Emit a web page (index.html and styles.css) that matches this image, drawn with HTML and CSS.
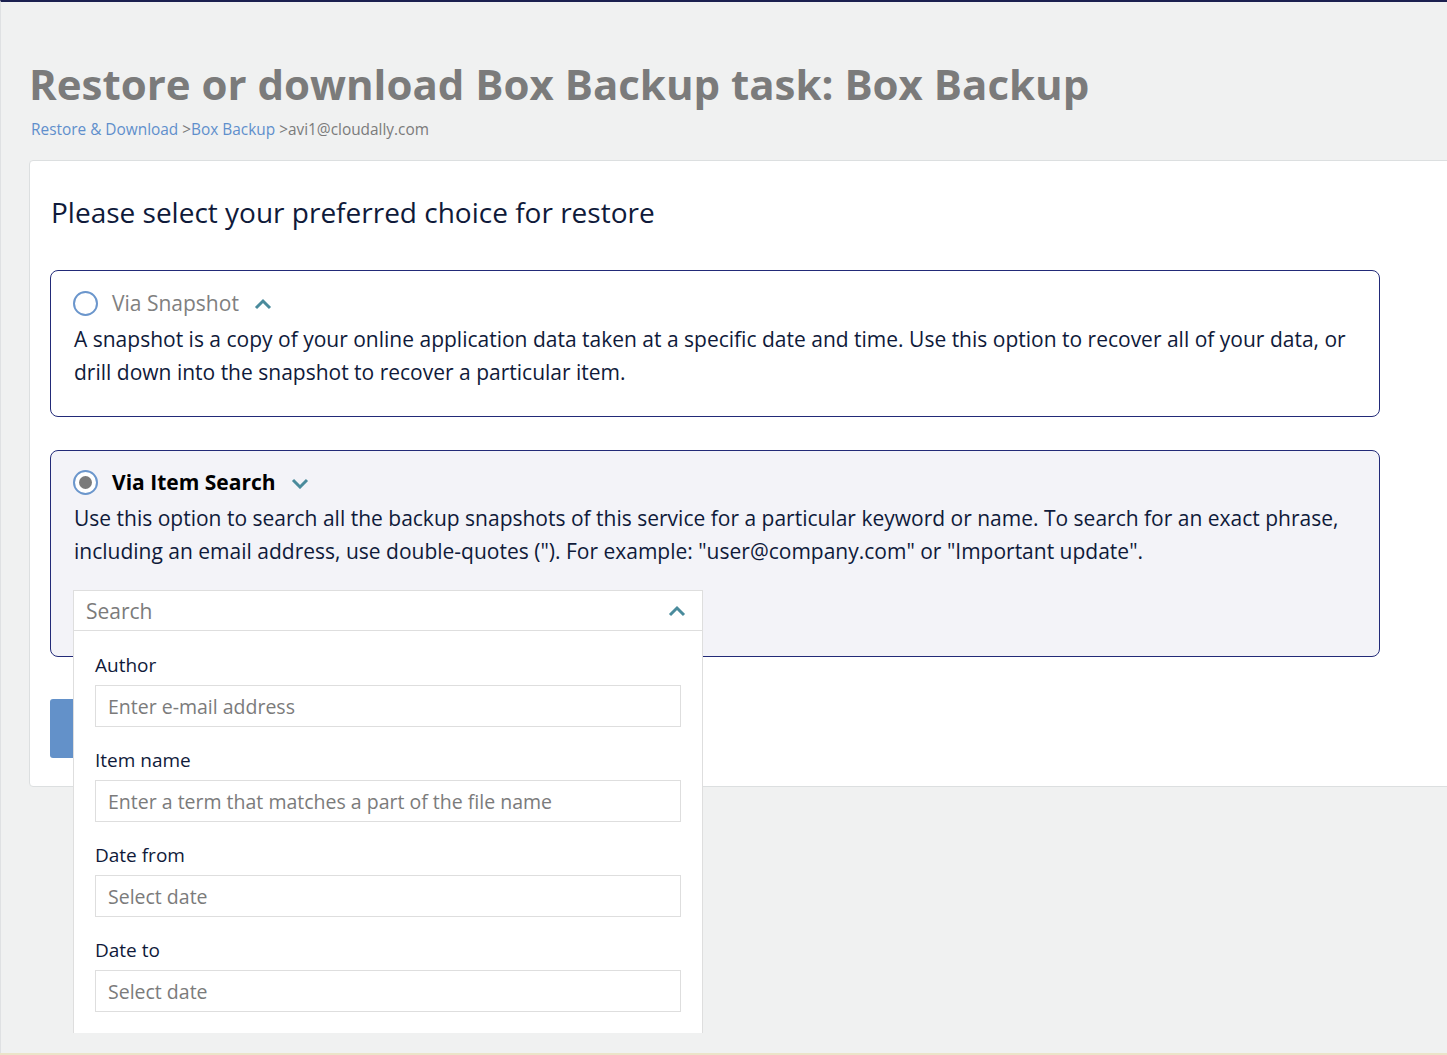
FILE: index.html
```html
<!doctype html>
<html lang="en">
<head>
<meta charset="utf-8">
<title>Restore or download Box Backup task</title>
<link rel="stylesheet" href="styles.css">
</head>
<body>

<div class="page">

	<h1 class="title">Restore or download Box Backup task: Box Backup</h1>

	<div class="crumbs">
		<a href="#">Restore &amp; Download</a> <span class="sep">&gt;</span><a href="#">Box Backup</a> <span class="sep">&gt;avi1@cloudally.com</span>
	</div>

	<div class="card">

		<h2 class="card_head">Please select your preferred choice for restore</h2>

		<div class="opt">
			<div class="opt_top">
				<span class="radio"></span>
				<span class="opt_name">Via Snapshot</span>
				<svg class="chev" width="18" height="12" viewBox="0 0 18 12"><polyline points="2,10 9,3 16,10" fill="none" stroke="#4a8b9c" stroke-width="3"/></svg>
			</div>
			<p class="opt_text">A snapshot is a copy of your online application data taken at a specific date and time. Use this option to recover all of your data, or drill down into the snapshot to recover a particular item.</p>
		</div>

		<div class="opt on">
			<div class="opt_top">
				<span class="radio"><i></i></span>
				<span class="opt_name">Via Item Search</span>
				<svg class="chev" width="18" height="12" viewBox="0 0 18 12"><polyline points="2,3 9,10 16,3" fill="none" stroke="#4a8b9c" stroke-width="3"/></svg>
			</div>
			<p class="opt_text">Use this option to search all the backup snapshots of this service for a particular keyword or name. To search for an exact phrase, including an email address, use double-quotes ("). For example: "user@company.com" or "Important update".</p>

			<div class="search">
				<div class="search_bar">
					<span>Search</span>
					<svg width="18" height="12" viewBox="0 0 18 12"><polyline points="2,10 9,3 16,10" fill="none" stroke="#4a8b9c" stroke-width="3"/></svg>
				</div>
				<div class="search_panel">
					<label>Author</label>
					<input type="text" placeholder="Enter e-mail address">
					<label>Item name</label>
					<input type="text" placeholder="Enter a term that matches a part of the file name">
					<label>Date from</label>
					<input type="text" placeholder="Select date">
					<label>Date to</label>
					<input type="text" placeholder="Select date">
				</div>
			</div>
		</div>

		<button class="go">Continue</button>

	</div>

</div>

<div class="bottom_line"></div>

</body>
</html>
```

FILE: styles.css
```css
html,body {margin:0;padding:0;}
body {
	background:#f0f1f1;
	font-family:"Open Sans", "Noto Sans", sans-serif;
	color:#0f1a3a;
	border-top:2px solid #1b2050;
	border-left:1px solid #dfe1e3;
	overflow:hidden;
	height:1053px;
	box-sizing:border-box;
}

.page { padding:0 0 0 28px; }

.title {
	margin:0;
	padding-top:54px;
	font-size:42px;
	line-height:56px;
	font-weight:700;
	color:#7b7b7b;
}

.crumbs {
	margin-top:7px;
	font-size:15.4px;
	line-height:22px;
	color:#7b7b7b;
	padding-left:2px;
}
.crumbs a { color:#5f8fcc; text-decoration:none; }

.card {
	margin-top:19px;
	width:1460px;
	height:627px;
	background:#fff;
	border:1px solid #dcdfe0;
	border-radius:4px;
	padding:33px 21px 0 20px;
	box-sizing:border-box;
}

.card_head {
	margin:0 0 40px 1px;
	font-size:28px;
	line-height:36px;
	font-weight:400;
	color:#0f1a3a;
}

/* options */

.opt {
	width:1330px;
	box-sizing:border-box;
	border:1px solid #222a78;
	border-radius:8px;
	background:#fff;
	padding:17px 23px 27px 22px;
	margin-bottom:33px;
}
.opt.on {
	background:#f3f3f8;
	padding-top:16px;
	padding-bottom:25px;
	margin-bottom:42px;
}

.opt_top {
	display:flex;
	align-items:center;
	height:30px;
}

.radio {
	width:25px; height:25px;
	box-sizing:border-box;
	border:2px solid #6b96cc;
	border-radius:50%;
	background:#fff;
	display:flex;
	align-items:center;
	justify-content:center;
	margin-right:14px;
}
.radio i {
	width:13px; height:13px;
	border-radius:50%;
	background:#7a7a7a;
}

.opt_name {
	font-size:21px;
	color:#808080;
}
.on .opt_name { color:#000; font-weight:700; }

.chev { margin-left:15px; margin-top:2px; }

.opt_text {
	margin:5px 0 0 1px;
	font-size:21px;
	line-height:33px;
	color:#0f1a3a;
}

/* search dropdown */

.search {
	position:relative;
	width:630px;
	margin-top:22px;
}

.search_bar {
	height:41px;
	box-sizing:border-box;
	background:#fff;
	border:1px solid #dedede;
	display:flex;
	align-items:center;
	justify-content:space-between;
	padding:0 16px 0 12px;
	font-size:21px;
	color:#7b7b7b;
}

.search_panel {
	position:absolute;
	left:0; top:41px;
	width:630px;
	box-sizing:border-box;
	background:#fff;
	border:1px solid #dedede;
	border-top:none;
	border-bottom:none;
	padding:20px 21px 21px 21px;
	display:flex;
	flex-direction:column;
	z-index:5;
}

.search_panel label {
	font-size:19px;
	line-height:28px;
	margin-bottom:6px;
	color:#0f1a3a;
}

.search_panel input {
	height:42px;
	box-sizing:border-box;
	border:1px solid #dedede;
	padding:0 12px;
	font-family:"Open Sans", "Noto Sans", sans-serif;
	font-size:19.5px;
	color:#333;
	margin-bottom:19px;
	outline:none;
}
.search_panel input:last-child { margin-bottom:0; }
.search_panel input::placeholder { color:#7b7b7b; }

.go {
	width:160px; height:59px;
	border:none;
	border-radius:3px;
	background:#6391c9;
	color:#fff;
	font-family:"Open Sans", sans-serif;
	font-size:18px;
}

.bottom_line {
	position:fixed;
	left:0; right:0; bottom:0;
	height:2px;
	background:#ebe4c8;
}
```
